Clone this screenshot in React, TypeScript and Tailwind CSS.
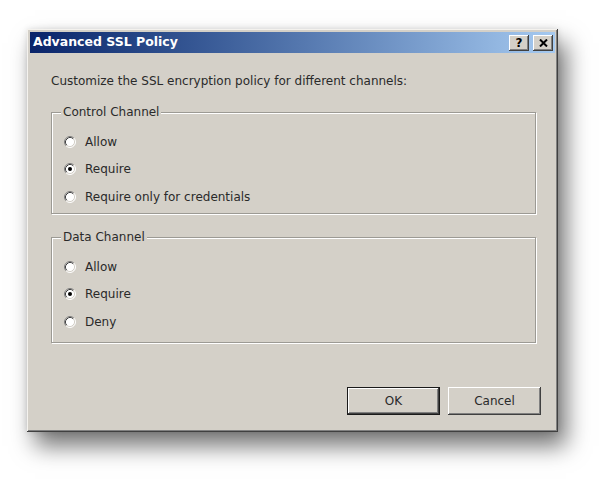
import React from "react";

const font = { fontFamily: '"DejaVu Sans", "Liberation Sans", sans-serif' };

function Radio({ checked }: { checked?: boolean }) {
  return (
    <svg width="12" height="12" viewBox="0 0 12 12" className="shrink-0">
      <circle cx="6" cy="6" r="5" fill="#ffffff" />
      <path d="M2.11 9.89 A5.5 5.5 0 0 1 9.89 2.11" stroke="#808080" fill="none" />
      <path d="M2.82 9.18 A4.5 4.5 0 0 1 9.18 2.82" stroke="#404040" fill="none" />
      <path d="M9.89 2.11 A5.5 5.5 0 0 1 2.11 9.89" stroke="#ffffff" fill="none" />
      <path d="M9.18 2.82 A4.5 4.5 0 0 1 2.82 9.18" stroke="#d4d0c8" fill="none" />
      {checked ? <circle cx="6" cy="6" r="2" fill="#000000" /> : null}
    </svg>
  );
}

function Group({
  title,
  options,
  selected,
  className,
}: {
  title: string;
  options: string[];
  selected: number;
  className: string;
}) {
  return (
    <div
      className={`relative border border-[#9c9a94] shadow-[1px_1px_0_#ffffff,inset_1px_1px_0_#ffffff] pt-[15px] ${className}`}
    >
      <span className="absolute -top-[9px] left-[9px] bg-[#d4d0c8] px-[2px] leading-[16px]">
        {title}
      </span>
      {options.map((o, i) => (
        <div key={o} className="flex h-[27.5px] items-center gap-[9px] pl-[12px]">
          <Radio checked={i === selected} />
          <span className="leading-[16px]">{o}</span>
        </div>
      ))}
    </div>
  );
}

function CaptionButton({ children }: { children: React.ReactNode }) {
  return (
    <div className="flex h-[16px] w-[20px] items-center justify-center bg-[#d4d0c8] shadow-[inset_-1px_-1px_0_#404040,inset_1px_1px_0_#ffffff,inset_-2px_-2px_0_#808080]">
      {children}
    </div>
  );
}

function PushButton({ label, isDefault }: { label: string; isDefault?: boolean }) {
  return (
    <button
      className={`flex h-[28px] w-[93px] items-center justify-center bg-[#d4d0c8] text-[12px] text-[#2a2a2a] ${
        isDefault
          ? "border border-[#1a1a1a] shadow-[inset_-1px_-1px_0_#404040,inset_1px_1px_0_#ffffff,inset_-2px_-2px_0_#808080]"
          : "shadow-[inset_-1px_-1px_0_#404040,inset_1px_1px_0_#ffffff,inset_-2px_-2px_0_#808080]"
      }`}
    >
      {label}
    </button>
  );
}

export default function App() {
  return (
    <div className="h-[488px] w-[613px] bg-white pl-[27px] pt-[29px]" style={font}>
      <div className="flex h-[403px] w-[531px] flex-col bg-[#d4d0c8] p-[3px] text-[12px] text-[#2a2a2a] shadow-[inset_-1px_-1px_0_#404040,inset_1px_1px_0_#f4f2ee,inset_-2px_-2px_0_#808080,8px_14px_22px_rgba(0,0,0,0.55),0_0_6px_rgba(0,0,0,0.12)]">
        <div className="flex h-[21px] items-center justify-between bg-gradient-to-r from-[#0a246a] to-[#a6caf0] pl-[3px] pr-[2px]">
          <span className="text-[12.5px] font-bold text-white">Advanced SSL Policy</span>
          <div className="flex gap-[4px]">
            <CaptionButton>
              <span className="text-[12px] font-bold leading-none text-black">?</span>
            </CaptionButton>
            <CaptionButton>
              <svg width="9" height="8" viewBox="0 0 9 8">
                <path d="M1 0.5 L8 7.5 M8 0.5 L1 7.5" stroke="#000" strokeWidth="2" />
              </svg>
            </CaptionButton>
          </div>
        </div>
        <div className="flex flex-1 flex-col pl-[21px] pr-[19px]">
          <p className="mt-[20px] leading-[16px]">
            Customize the SSL encryption policy for different channels:
          </p>
          <Group
            className="mt-[23px] h-[102px]"
            title="Control Channel"
            options={["Allow", "Require", "Require only for credentials"]}
            selected={1}
          />
          <Group
            className="mt-[23px] h-[106px]"
            title="Data Channel"
            options={["Allow", "Require", "Deny"]}
            selected={1}
          />
        </div>
        <div className="mb-[14px] flex justify-end gap-[8px] pr-[14px]">
          <PushButton label="OK" isDefault />
          <PushButton label="Cancel" />
        </div>
      </div>
    </div>
  );
}
